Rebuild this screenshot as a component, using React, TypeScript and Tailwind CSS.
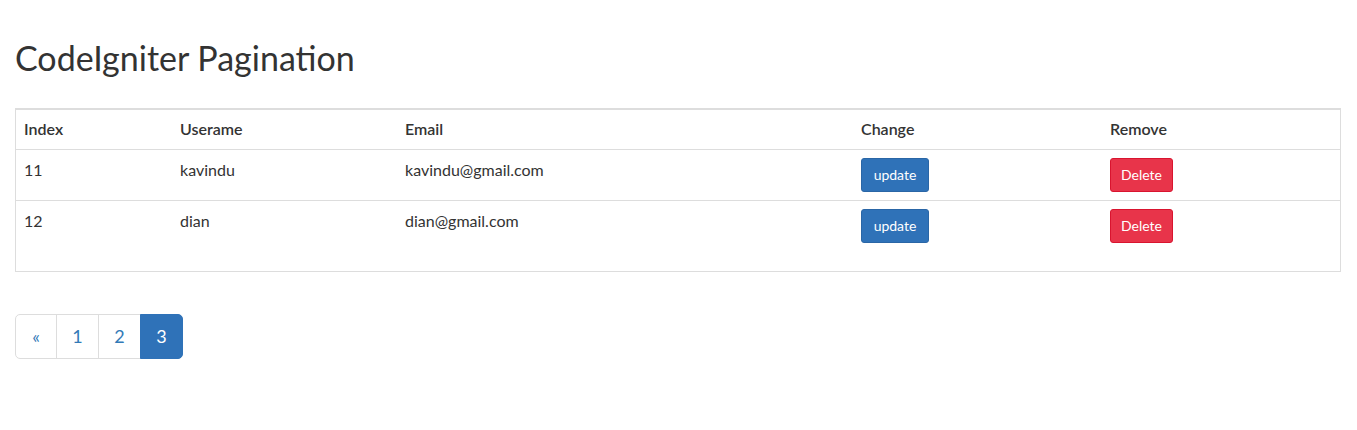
export default function App() {
  const rows = [
    { index: 11, name: "kavindu", email: "kavindu@gmail.com" },
    { index: 12, name: "dian", email: "dian@gmail.com" },
  ];

  return (
    <div className="min-h-[430px] bg-white pl-[15px] pr-[16px] pt-[36px] text-[#333]" style={{ fontFamily: "Lato, 'Noto Sans', sans-serif" }}>
      <h1 className="text-[34px] font-normal leading-[44px] text-[#333]">CodeIgniter Pagination</h1>

      <div className="mt-[28px] border border-t-2 border-[#ddd]">
        <table className="w-full border-collapse text-left text-[16px]">
          <thead>
            <tr className="h-[39px] border-b border-[#ddd]">
              <th className="w-[156px] px-2 font-semibold">Index</th>
              <th className="w-[225px] px-2 font-semibold">Userame</th>
              <th className="w-[456px] px-2 font-semibold">Email</th>
              <th className="w-[249px] px-2 font-semibold">Change</th>
              <th className="px-2 font-semibold">Remove</th>
            </tr>
          </thead>
          <tbody>
            {rows.map((row, i) => (
              <tr key={row.index} className={`h-[51px] align-top ${i === 0 ? "border-b border-[#ddd]" : ""}`}>
                <td className="px-2 pt-[8px]">{row.index}</td>
                <td className="px-2 pt-[8px]">{row.name}</td>
                <td className="px-2 pt-[8px]">{row.email}</td>
                <td className="px-2 pt-2">
                  <button className="h-[34px] w-[68px] rounded-[3px] border border-[#2a66a6] bg-[#2f72b8] text-[14px] text-white">update</button>
                </td>
                <td className="px-2 pt-2">
                  <button className="h-[34px] w-[63px] rounded-[3px] border border-[#d9142f] bg-[#e8344a] text-[14px] text-white">Delete</button>
                </td>
              </tr>
            ))}
            <tr className="h-[20px]">
              <td colSpan={5}></td>
            </tr>
          </tbody>
        </table>
      </div>

      <nav className="mt-[42px] flex">
        <a className="flex h-[45px] w-[42px] items-center justify-center rounded-l-[5px] border border-[#ddd] text-[18px] text-[#337ab7]">«</a>
        <a className="-ml-px flex h-[45px] w-[43px] items-center justify-center border border-[#ddd] text-[18px] text-[#337ab7]">1</a>
        <a className="-ml-px flex h-[45px] w-[43px] items-center justify-center border border-[#ddd] text-[18px] text-[#337ab7]">2</a>
        <a className="-ml-px flex h-[45px] w-[43px] items-center justify-center rounded-r-[5px] border border-[#2f72b8] bg-[#2f72b8] text-[18px] text-white">3</a>
      </nav>
    </div>
  );
}
